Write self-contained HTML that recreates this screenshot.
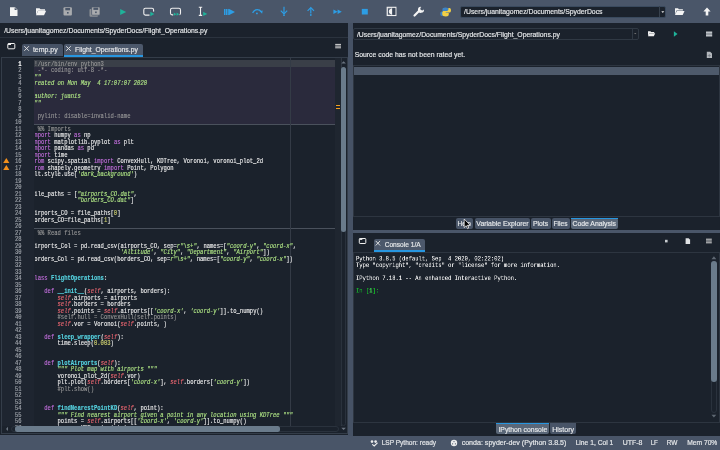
<!DOCTYPE html>
<html><head><meta charset="utf-8">
<style>
*{margin:0;padding:0;box-sizing:border-box}
html,body{width:720px;height:450px;overflow:hidden;background:#4a5669;font-family:"Liberation Sans",sans-serif;position:relative}
.a{position:absolute}
.ui{color:#e4e6e8;white-space:nowrap;line-height:1}
#toolbar{left:0;top:0;width:720px;height:23px;background:#4a5669}
.dk{background:#1b222c}
.code{font-family:"Liberation Mono",monospace;font-size:5.45px;line-height:6.5px;white-space:pre;color:#f0f0f0}
.kw{color:#c670e0}.st{color:#b0e686;font-style:italic}.nu{color:#d2d470}.de{color:#57d6e4;font-weight:bold}.in{color:#ee6772;font-style:italic}.cm{color:#999999}
svg{position:absolute;overflow:visible}
.gl{will-change:transform}
</style></head><body>
<!-- toolbar -->
<div id="toolbar" class="a"></div>
<svg style="left:0;top:0" width="720" height="23">
 <!-- new file -->
 <path d="M10 7.2h5l2.5 2.5v6.3h-7.5z" fill="#f4f4f4"/>
 <path d="M14.6 7.4v2.6h2.6z" fill="#4a5669"/>
 <!-- open folder -->
 <path d="M36 8.2h3.5l1 1h4.5v1.5h-7l-2 4.5z" fill="#f4f4f4"/>
 <path d="M36 15.3l2.2-4.6h8l-2.2 4.6z" fill="#f4f4f4"/>
 <!-- save -->
 <rect x="63.5" y="7.3" width="8.4" height="8.3" rx="1" fill="#a9abae"/>
 <rect x="65.3" y="8" width="4.8" height="2.3" fill="#4a5669"/>
 <rect x="67" y="12" width="1.6" height="1.6" fill="#4a5669"/>
 <!-- save all -->
 <rect x="89.5" y="9" width="8.5" height="7.7" rx="1" fill="#8d9196"/>
 <rect x="91.6" y="6.9" width="8.4" height="8.3" rx="1" fill="#a9abae" stroke="#4a5669" stroke-width=".7"/>
 <rect x="93.4" y="7.6" width="4.8" height="2.3" fill="#4a5669"/>
 <rect x="95.1" y="11.5" width="1.6" height="1.6" fill="#4a5669"/>
 <!-- run -->
 <path d="M120.2 8.9l6 3.05l-6 3.05z" fill="#1fb39a"/>
 <!-- run cell -->
 <rect x="143.8" y="8.3" width="9.8" height="6.8" rx="1.6" fill="none" stroke="#f0f0f0" stroke-width="1.1"/>
 <path d="M149.5 11.6h6v5h-6z" fill="#4a5669"/>
 <path d="M150.3 11.8l4 2.2l-4 2.2z" fill="#1fb39a"/>
 <!-- run cell advance -->
 <rect x="170.5" y="8.3" width="10" height="6.6" rx="1.6" fill="none" stroke="#f0f0f0" stroke-width="1.1"/>
 <path d="M173.2 12.2h6.4v4h-6.4z" fill="#4a5669"/>
 <path d="M173.8 12.6l2.6 1.6l-2.6 1.6zM176.6 12.6l2.6 1.6l-2.6 1.6z" fill="#1fb39a"/>
 <!-- run selection -->
 <path d="M198.8 7.2h3.4M198.8 15.4h3.4M200.5 7.2v8.2" stroke="#f0f0f0" stroke-width="1.1" fill="none"/>
 <path d="M203.2 11.7l4 2.2l-4 2.2z" fill="#1fb39a"/>
 <!-- debug -->
 <path d="M224 8.9h1.5v6.1h-1.5zM226 8.9h1.5v6.1h-1.5z" fill="#2d9de4"/>
 <path d="M228 8.9h0.8v6.1h-0.8z" fill="#2d9de4"/>
 <path d="M228.8 8.7l6.2 3.25l-6.2 3.25z" fill="#2d9de4"/>
 <!-- step over -->
 <path d="M252.6 12.9q1.8-3.3 4.6-3.3q2.6 0 4 2" stroke="#2d9de4" stroke-width="1.3" fill="none"/>
 <path d="M259.6 11.2l3.1-.6l-.6 3.2z" fill="#2d9de4"/>
 <circle cx="256.9" cy="13.4" r="0.95" fill="#2d9de4"/>
 <!-- step into -->
 <path d="M284 6.7v6.8" stroke="#2d9de4" stroke-width="1.2"/>
 <path d="M280.8 10.6l3.2 3.2l3.2-3.2" stroke="#2d9de4" stroke-width="1.2" fill="none"/>
 <circle cx="284" cy="15.2" r="0.9" fill="#2d9de4"/>
 <!-- step return -->
 <path d="M310.8 8v5.5" stroke="#2d9de4" stroke-width="1.2"/>
 <path d="M307.6 10.9l3.2-3.2l3.2 3.2" stroke="#2d9de4" stroke-width="1.2" fill="none"/>
 <circle cx="310.8" cy="15" r="0.9" fill="#2d9de4"/>
 <!-- continue -->
 <path d="M333.4 9.4l4.2 2.3l-4.2 2.3zM337.6 9.4l4.2 2.3l-4.2 2.3z" fill="#2d9de4"/>
 <!-- stop -->
 <rect x="361.8" y="8.9" width="6" height="5.6" fill="#2d9de4"/>
 <!-- maximize -->
 <rect x="387.2" y="7.3" width="8.7" height="8.2" fill="none" stroke="#f0f0f0" stroke-width="1.1"/>
 <rect x="387.5" y="7.6" width="4.6" height="7.6" fill="#f0f0f0"/>
 <path d="M388 8.2h3.6v.5a2.75 2.75 0 0 0 0 5.5v.5h-3.6z" fill="#4a5669"/>
 <rect x="392.7" y="8.2" width="2.6" height="6.6" fill="#3b4657"/>
 <!-- wrench -->
 <path d="M414.5 15.5l5-5" stroke="#f4f4f4" stroke-width="2.2" stroke-linecap="round"/>
 <path d="M421.3 6.9a3 3 0 1 0 2.6 2.6l-1.6 1l-1.8-.8l-.2-1.8z" fill="#f4f4f4"/>
 <!-- python -->
 <g transform="translate(445.6 11.9) scale(0.88) translate(-445.6 -11.9)">
 <path d="M445.3 6.9c-2.2 0-3.3.8-3.3 2.2v1.7h3.4v.6h-4c-1.2 0-1.9 1-1.9 2.6c0 1.6.7 2.5 1.9 2.5h1v-1.6c0-1.2 1-2 2.2-2h3c1 0 1.8-.8 1.8-1.8v-2c0-1.4-1.5-2.2-4.1-2.2z" fill="#3d84c6"/>
 <path d="M445.9 17c2.2 0 3.3-.8 3.3-2.2v-1.7h-3.4v-.6h4c1.2 0 1.9-1 1.9-2.6c0-1.6-.7-2.5-1.9-2.5h-1v1.6c0 1.2-1 2-2.2 2h-3c-1 0-1.8.8-1.8 1.8v2c0 1.4 1.5 2.2 4.1 2.2z" fill="#f2cf45"/>
</g>
</svg>
<!-- main combo -->
<div class="a" style="left:460px;top:5.5px;width:206px;height:12px;background:#1b222c;border:1px solid #3a4a5e;border-radius:2px"></div>
<div class="a" style="left:659px;top:6px;width:1px;height:11px;background:#37414d"></div>
<svg style="left:0;top:0" width="720" height="23">
 <path d="M661.3 11.2h3l-1.5 1.8z" fill="#e8e8e8"/>
 <path d="M675 8.3h3l.9 1h4v1.3h-6.5l-1.4 4.3z" fill="#f4f4f4"/>
 <path d="M675 14.9l1.8-4h7.7l-1.8 4z" fill="#f4f4f4"/>
 <path d="M707 7.6l-3.6 3.8h2.3v4.2h2.6v-4.2h2.3z" fill="#f4f4f4"/>
</svg>

<!-- LEFT PANE -->
<div class="a dk" style="left:0;top:23px;width:348px;height:412px"></div>
<div class="a" style="left:0;top:36.5px;width:348px;height:1px;background:#2b333e"></div>
<!-- tab row -->
<svg style="left:0;top:0" width="348" height="60">
 <rect x="7.8" y="43.5" width="7" height="5.3" rx=".8" fill="none" stroke="#f0f0f0" stroke-width="1"/>
 <rect x="8" y="43.5" width="3" height="1.5" fill="#f0f0f0"/>
 <path d="M335.2 44.4h5.8M335.2 46.1h5.8M335.2 47.8h5.8" stroke="#d8d8d8" stroke-width="1"/>
</svg>
<div class="a" style="left:22px;top:43.9px;width:40.5px;height:11.9px;background:#465265;border-radius:2px 2px 0 0"></div>
<div class="a" style="left:64.2px;top:43.8px;width:78.5px;height:12.5px;background:#4c586b;border-radius:2px 2px 0 0"></div>
<div class="a" style="left:64.2px;top:55px;width:78.5px;height:1.8px;background:#2796e0"></div>
<svg style="left:0;top:0" width="348" height="60">
 <path d="M24.3 46.2l4.6 4.6M28.9 46.2l-4.6 4.6M66.2 46.2l4.6 4.6M70.8 46.2l-4.6 4.6" stroke="#e8e8e8" stroke-width=".9"/>
</svg>

<!-- editor frame -->
<div class="a" style="left:0.5px;top:56.5px;width:347.5px;height:377px;border:1px solid #343d49;background:#1b222c"></div>
<!-- gutter -->
<div class="a" style="left:2px;top:57.5px;width:32px;height:368px;background:#1e2530"></div>
<!-- current line + cell -->
<div class="a" style="left:34px;top:60px;width:301px;height:6.5px;background:#3a3f48"></div>
<div class="a" style="left:34px;top:66.5px;width:301px;height:58px;background:#2a2a3c"></div>
<div class="a" style="left:34px;top:124.3px;width:301px;height:1.2px;background:#4a515c"></div>
<div class="a" style="left:34px;top:228.3px;width:301px;height:1.2px;background:#4a515c"></div>
<div class="a" style="left:290px;top:57.5px;width:1px;height:368px;background:#343b46"></div>
<!-- line numbers -->
<div class="a gl" style="left:2px;top:57.5px;width:32px;height:368px;overflow:hidden"><div class="a code" style="left:0;top:2.6px;width:45px;text-align:right;color:#9da2a9;font-size:12.54px;line-height:13px;transform:scale(0.4346,0.5);transform-origin:0 0;-webkit-text-stroke:.35px"><span style="color:#fff;font-weight:bold">1</span>
2
3
4
5
6
7
8
9
10
11
12
13
14
15
16
17
18
19
20
21
22
23
24
25
26
27
28
29
30
31
32
33
34
35
36
37
38
39
40
41
42
43
44
45
46
47
48
49
50
51
52
53
54
55
56
57</div></div>

<!-- warnings -->
<svg style="left:0;top:0" width="40" height="200">
 <path d="M6.3 158l-3.1 5h6.2z" fill="#f2901c"/>
 <path d="M6.3 165l-3.1 5h6.2z" fill="#f2901c"/>
</svg>
<!-- code -->
<div class="a gl" style="left:34.6px;top:57.5px;width:300.4px;height:368px;overflow:hidden">
 <div class="a code" style="left:-4.1px;top:2.6px;-webkit-text-stroke:.24px;font-size:12.54px;line-height:13px;transform:scale(0.4408,0.5);transform-origin:0 0"><span class="cm">#!/usr/bin/env python3</span>
<span class="cm"># -*- coding: utf-8 -*-</span>
<span class="st">"""</span>
<span class="st">Created on Mon May  4 17:07:07 2020</span>

<span class="st">@author: juanis</span>
<span class="st">"""</span>

<span class="cm"># pylint: disable=invalid-name</span>

<span class="cm"># %% Imports</span>
<span class="kw">import</span> numpy <span class="kw">as</span> np
<span class="kw">import</span> matplotlib.pyplot <span class="kw">as</span> plt
<span class="kw">import</span> pandas <span class="kw">as</span> pd
<span class="kw">import</span> time
<span class="kw">from</span> scipy.spatial <span class="kw">import</span> ConvexHull, KDTree, Voronoi, voronoi_plot_2d
<span class="kw">from</span> shapely.geometry <span class="kw">import</span> Point, Polygon
plt.style.use(<span class="st">'dark_background'</span>)


file_paths = [<span class="st">"airports_CO.dat"</span>,
              <span class="st">"borders_CO.dat"</span>]

airports_CO = file_paths[<span class="nu">0</span>]
borders_CO=file_paths[<span class="nu">1</span>]

<span class="cm"># %% Read files</span>

airports_Col = pd.read_csv(airports_CO, sep=<span class="st">r"\s+"</span>, names=[<span class="st">"coord-y"</span>, <span class="st">"coord-x"</span>,
                           <span class="st">'Altitude'</span>, <span class="st">"City"</span>, <span class="st">"Department"</span>, <span class="st">"Airport"</span>])
borders_Col = pd.read_csv(borders_CO, sep=<span class="st">r"\s+"</span>, names=[<span class="st">"coord-y"</span>, <span class="st">"coord-x"</span>])


<span class="kw">class</span> <span class="de">FlightOperations</span>:

    <span class="kw">def</span> <span class="de">__init__</span>(<span class="in">self</span>, airports, borders):
        <span class="in">self</span>.airports = airports
        <span class="in">self</span>.borders = borders
        <span class="in">self</span>.points = <span class="in">self</span>.airports[[<span class="st">'coord-x'</span>, <span class="st">'coord-y'</span>]].to_numpy()
<span class="cm">        #self.hull = ConvexHull(self.points)</span>
        <span class="in">self</span>.vor = Voronoi(<span class="in">self</span>.points, )

    <span class="kw">def</span> <span class="de">sleep_wrapper</span>(<span class="in">self</span>):
        time.sleep(<span class="nu">0.003</span>)


    <span class="kw">def</span> <span class="de">plotAirports</span>(<span class="in">self</span>):
<span class="st">        """ Plot map with airports """</span>
        voronoi_plot_2d(<span class="in">self</span>.vor)
        plt.plot(<span class="in">self</span>.borders[<span class="st">'coord-x'</span>], <span class="in">self</span>.borders[<span class="st">'coord-y'</span>])
<span class="cm">        #plt.show()</span>


    <span class="kw">def</span> <span class="de">findNearestPointKD</span>(<span class="in">self</span>, point):
<span class="st">        """ Find nearest airport given a point in any location using KDTree """</span>
        points = <span class="in">self</span>.airports[[<span class="st">'coord-x'</span>, <span class="st">'coord-y'</span>]].to_numpy()
        tree = KDTree(points)</div>
</div>
<!-- scroll flags -->
<div class="a" style="left:335px;top:57.5px;width:5.5px;height:368px;background:#1f2630"></div>
<div class="a" style="left:336px;top:104.6px;width:3.5px;height:1px;background:#f39c1f"></div>
<div class="a" style="left:336px;top:108.2px;width:3.5px;height:1px;background:#f39c1f"></div>
<!-- vscroll -->
<div class="a" style="left:340.5px;top:57.5px;width:6px;height:368px;background:#1b222c;border-left:1px solid #2f3742"></div>
<div class="a" style="left:340.5px;top:67px;width:5.5px;height:358.5px;border:1px solid #2a323d;border-radius:3px"></div>
<div class="a" style="left:340.8px;top:66.8px;width:5px;height:165.5px;background:#6a7b8b;border-radius:2.5px"></div>
<!-- hscroll -->
<div class="a" style="left:2px;top:425.5px;width:338px;height:7px;background:#1b222c"></div>
<div class="a" style="left:11px;top:426.2px;width:327.5px;height:5.5px;border:1px solid #2a323d;border-radius:3px"></div>
<div class="a" style="left:15px;top:426.2px;width:265px;height:5.5px;background:#6a7b8b;border-radius:2.5px"></div>

<svg style="left:0;top:0" width="348" height="440">
 <path d="M341.3 63.5l2.3-2.2l2.3 2.2z" fill="#6b7480"/>
 <path d="M341.3 427.8l2.3 2.2l2.3-2.2z" fill="#6b7480"/>
 <path d="M8 426.7l-2 2.2l2 2.2z" fill="#6b7480"/>
</svg>
<!-- SPLITTER -->
<div class="a" style="left:348px;top:23px;width:4.5px;height:412.5px;background:#465265"></div>

<!-- RIGHT PANE -->
<div class="a dk" style="left:352.5px;top:23px;width:367.5px;height:412.5px"></div>
<div class="a" style="left:352.5px;top:64.5px;width:1.2px;height:152px;background:#2d3540"></div>
<div class="a" style="left:352.5px;top:251.5px;width:1.2px;height:171px;background:#2d3540"></div>
<div class="a" style="left:718.6px;top:64.5px;width:1.2px;height:152px;background:#2d3540"></div>
<div class="a" style="left:718.6px;top:251.5px;width:1.2px;height:171px;background:#2d3540"></div>
<div class="a" style="left:352.5px;top:27.5px;width:286px;height:12px;background:#1b222c;border:1px solid #303944;border-radius:2px"></div>
<div class="a" style="left:631.5px;top:28px;width:1px;height:11px;background:#303944"></div>
<svg style="left:0;top:0" width="720" height="80">
 <path d="M634 33h2.5l-1.25 1.3z" fill="#777"/>
 <path d="M648 31.2h2.4l.8.8h3v1h-4.6l-1.6 3.2z" fill="#f0f0f0"/>
 <path d="M648 36.2l1.4-3h5.8l-1.4 3z" fill="#f0f0f0"/>
 <path d="M673.9 31.2l3.6 2.8l-3.6 2.8z" fill="#1fb39a"/>
 <path d="M706 31.5h6.2v1.4h-6.2zM706 33.3h6.2v1.4h-6.2zM706 35.1h6.2v1.3h-6.2z" fill="#bfc3c8"/>
 <path d="M706.8 51.8h3.4l1.8 1.8v4.4h-5.2z" fill="#b4b8bd"/>
 <path d="M707.6 55.6h3.4M709.3 54v3.3" stroke="#6a7078" stroke-width=".6"/>
</svg>
<div class="a" style="left:352.5px;top:64.5px;width:367.5px;height:1px;background:#2d3540"></div>
<div class="a" style="left:353.8px;top:66.7px;width:365px;height:8px;background:#4e5a6b"></div>
<div class="a" style="left:352.5px;top:216px;width:367.5px;height:1px;background:#2d3540"></div>
<!-- plugin tabs -->
<div class="a" style="left:455.8px;top:218px;width:17px;height:10.5px;background:#485467;border-radius:2px"></div>
<div class="a" style="left:474.5px;top:218px;width:55px;height:10.5px;background:#485467;border-radius:2px"></div>
<div class="a" style="left:531px;top:218px;width:19.5px;height:10.5px;background:#485467;border-radius:2px"></div>
<div class="a" style="left:551.5px;top:218px;width:18.5px;height:10.5px;background:#485467;border-radius:2px"></div>
<div class="a" style="left:571px;top:218px;width:46.5px;height:10.5px;background:#5a6778;border-radius:2px"></div>
<div class="a" style="left:571px;top:217.5px;width:46.5px;height:1.2px;background:#2796e0"></div>
<!-- splitter horizontal -->
<div class="a" style="left:352.5px;top:229.8px;width:367.5px;height:2.8px;background:#4a5669"></div>
<!-- console pane -->
<svg style="left:0;top:0" width="720" height="260">
 <rect x="359.3" y="238.5" width="6.5" height="5" rx=".8" fill="none" stroke="#f0f0f0" stroke-width="1"/>
 <rect x="359.5" y="238.5" width="2.8" height="1.4" fill="#f0f0f0"/>
 <rect x="665" y="239.8" width="2.6" height="2.6" fill="#c8ccd0"/>
 <path d="M685.6 238.3h3l1.5 1.5v4.3h-4.5z" fill="#e0e2e4"/>
 <path d="M706 239.2h5.8M706 241h5.8M706 242.8h5.8" stroke="#d8d8d8" stroke-width="1"/>
</svg>
<div class="a" style="left:373.8px;top:239px;width:51.7px;height:12.3px;background:#4c586b;border-radius:2px 2px 0 0"></div>
<div class="a" style="left:373.8px;top:250px;width:51.7px;height:1.9px;background:#2796e0"></div>
<svg style="left:0;top:0" width="720" height="260">
 <path d="M375.7 240.9l4.4 4.6M380.1 240.9l-4.4 4.6" stroke="#e8e8e8" stroke-width=".9"/>
</svg>
<div class="a" style="left:352.5px;top:251.5px;width:367.5px;height:1px;background:#2d3540"></div>
<div class="a code gl" style="left:355.5px;top:256.3px;color:#f0f0f0;font-size:12.6px;line-height:12.85px;transform:scale(0.4352,0.5);transform-origin:0 0;-webkit-text-stroke:.24px">Python 3.8.5 (default, Sep  4 2020, 02:22:02)
Type "copyright", "credits" or "license" for more information.

IPython 7.18.1 -- An enhanced Interactive Python.

<span style="color:#17b92b">In [</span><span style="color:#3ed84f;font-weight:bold">1</span><span style="color:#17b92b">]:</span></div>
<!-- console scroll -->
<div class="a" style="left:710.8px;top:260.5px;width:6px;height:152px;border:1px solid #2a323d;border-radius:3px"></div>
<div class="a" style="left:710.8px;top:260.5px;width:6px;height:121.5px;background:#6a7b8b;border-radius:3px"></div>
<svg style="left:0;top:0" width="720" height="450"><path d="M711.5 259.3l2.4-3l2.4 3z" fill="#5f6873"/><path d="M711.5 414.8l2.4 2.6l2.4-2.6z" fill="#5f6873"/></svg>
<div class="a" style="left:352.5px;top:421.5px;width:367.5px;height:1px;background:#2d3540"></div>
<!-- bottom tabs -->
<div class="a" style="left:496.3px;top:422.5px;width:52.5px;height:11.7px;background:#5a6778;border-radius:0 0 2px 2px"></div>
<div class="a" style="left:496.3px;top:422.5px;width:52.5px;height:1.5px;background:#2796e0"></div>
<div class="a" style="left:550px;top:422.5px;width:26.2px;height:11.7px;background:#485467;border-radius:0 0 2px 2px"></div>

<!-- STATUS BAR -->
<div class="a" style="left:0;top:435.5px;width:720px;height:14.5px;background:#495568"></div>
<svg style="left:0;top:0" width="720" height="450">
 <circle cx="372" cy="441.6" r="1.3" fill="#ececec"/>
 <circle cx="375.6" cy="441.6" r="1.3" fill="#ececec"/>
 <path d="M372.6 444.6l1.6 1.3l3-2.8" stroke="#ececec" stroke-width="1.2" fill="none" stroke-linecap="round"/>
 <circle cx="454" cy="443" r="3.2" fill="#ececec"/>
 <circle cx="454" cy="441.6" r=".6" fill="#495568"/>
 <circle cx="452.6" cy="443.8" r=".6" fill="#495568"/>
 <circle cx="455.4" cy="443.8" r=".6" fill="#495568"/>
</svg>
<svg class="gl" style="left:0;top:0" width="720" height="450" font-family="Liberation Sans" fill="#e6e8ea" stroke="#e6e8ea" stroke-width="0.18"><text x="4.15" y="33.23" font-size="7.8" textLength="203.20" lengthAdjust="spacingAndGlyphs">/Users/juanitagomez/Documents/SpyderDocs/Flight_Operations.py</text><text x="32.95" y="52.38" font-size="7.5" textLength="24.70" lengthAdjust="spacingAndGlyphs">temp.py</text><text x="75.05" y="52.38" font-size="7.5" textLength="62.80" lengthAdjust="spacingAndGlyphs">Flight_Operations.py</text><text x="356.95" y="36.53" font-size="7.8" textLength="203.00" lengthAdjust="spacingAndGlyphs">/Users/juanitagomez/Documents/SpyderDocs/Flight_Operations.py</text><text x="354.65" y="57.48" font-size="7.8" textLength="110.40" lengthAdjust="spacingAndGlyphs">Source code has not been rated yet.</text><text x="464.05" y="14.33" font-size="7.8" textLength="138.50" lengthAdjust="spacingAndGlyphs">/Users/juanitagomez/Documents/SpyderDocs</text><text x="457.45" y="225.81" font-size="7.3" textLength="13.40" lengthAdjust="spacingAndGlyphs">Help</text><text x="476.35" y="225.81" font-size="7.3" textLength="52.30" lengthAdjust="spacingAndGlyphs">Variable Explorer</text><text x="532.95" y="225.81" font-size="7.3" textLength="15.20" lengthAdjust="spacingAndGlyphs">Plots</text><text x="553.55" y="225.81" font-size="7.3" textLength="14.00" lengthAdjust="spacingAndGlyphs">Files</text><text x="572.45" y="225.81" font-size="7.3" textLength="43.50" lengthAdjust="spacingAndGlyphs">Code Analysis</text><text x="384.65" y="247.31" font-size="7.3" textLength="36.10" lengthAdjust="spacingAndGlyphs">Console 1/A</text><text x="498.40" y="432.21" font-size="7.3" textLength="48.85" lengthAdjust="spacingAndGlyphs">IPython console</text><text x="552.15" y="432.21" font-size="7.3" textLength="21.95" lengthAdjust="spacingAndGlyphs">History</text><text x="381.65" y="445.01" font-size="7.0" textLength="54.50" lengthAdjust="spacingAndGlyphs">LSP Python: ready</text><text x="461.65" y="445.01" font-size="7.0" textLength="104.70" lengthAdjust="spacingAndGlyphs">conda: spyder-dev (Python 3.8.5)</text><text x="575.65" y="445.01" font-size="7.0" textLength="37.70" lengthAdjust="spacingAndGlyphs">Line 1, Col 1</text><text x="622.65" y="445.01" font-size="7.0" textLength="19.70" lengthAdjust="spacingAndGlyphs">UTF-8</text><text x="650.65" y="445.01" font-size="7.0" textLength="7.20" lengthAdjust="spacingAndGlyphs">LF</text><text x="666.65" y="445.01" font-size="7.0" textLength="10.70" lengthAdjust="spacingAndGlyphs">RW</text><text x="687.15" y="445.01" font-size="7.0" textLength="30.20" lengthAdjust="spacingAndGlyphs">Mem 70%</text></svg>
<svg style="left:0;top:0" width="720" height="450"><path d="M464.2 219v8.6l2-1.9l1.35 3l1.2-.55l-1.3-2.9h2.8z" fill="#000" stroke="#fff" stroke-width=".7" stroke-linejoin="round"/></svg>
</body></html>
